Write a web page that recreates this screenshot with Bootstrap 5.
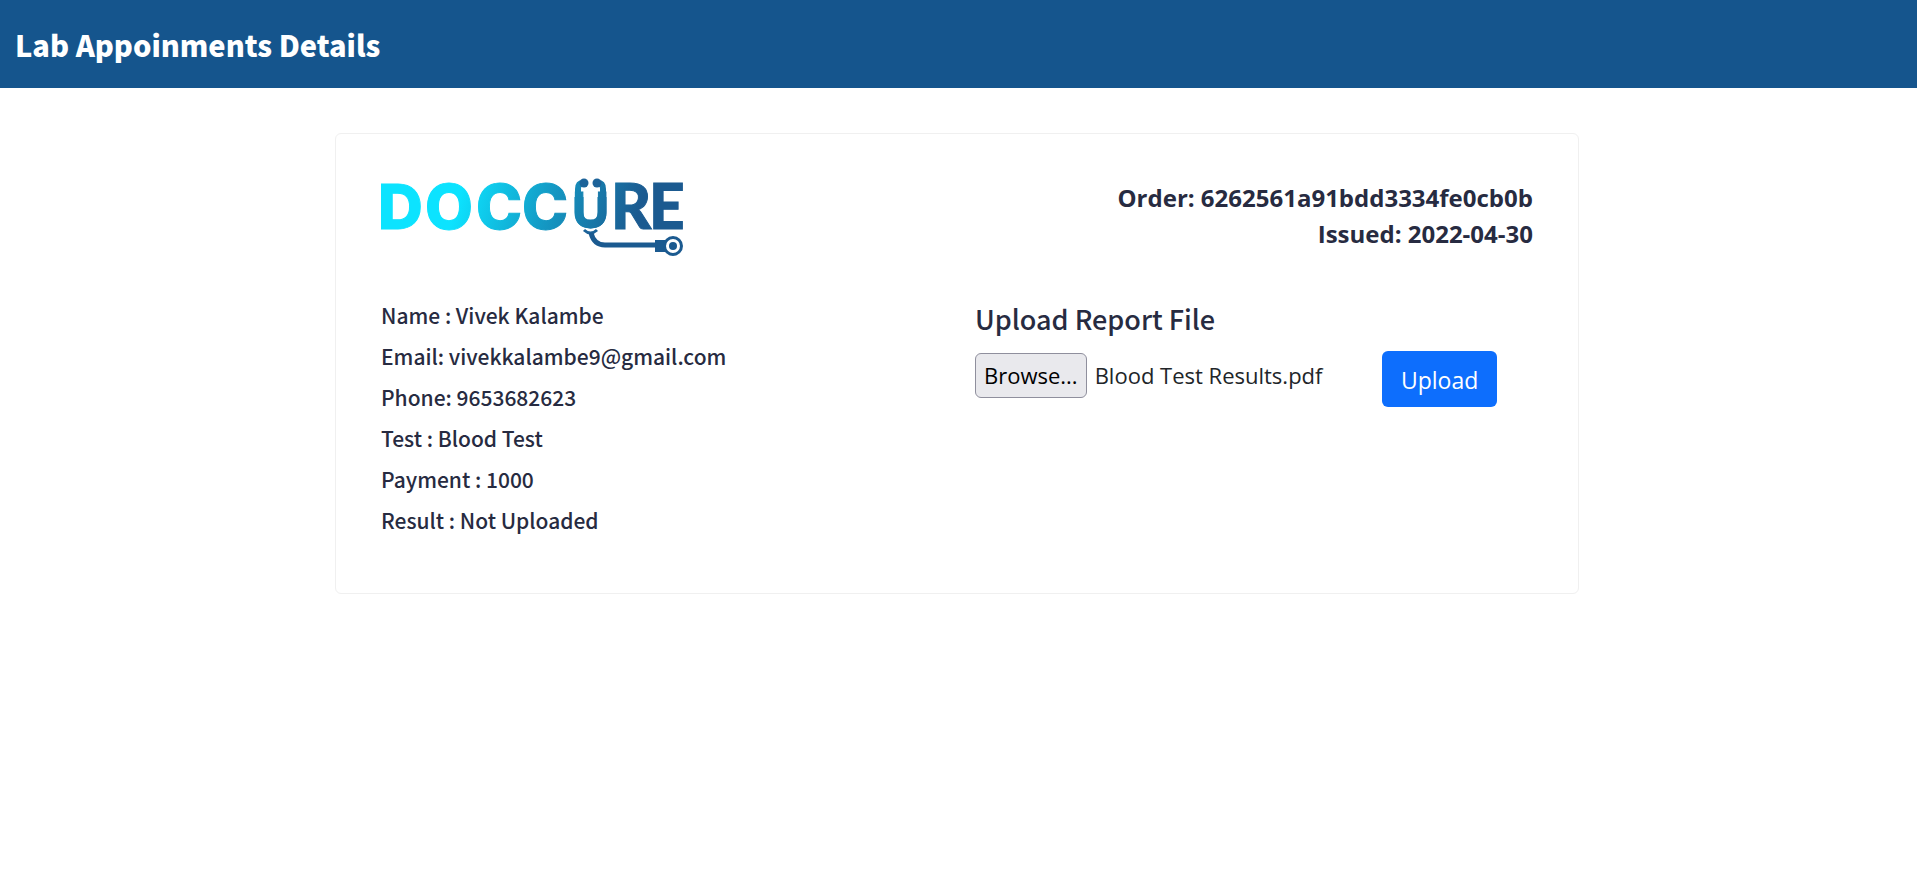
<!DOCTYPE html>
<html lang="en">
<head>
<meta charset="utf-8">
<meta name="viewport" content="width=device-width, initial-scale=1">
<title>Lab Appoinments Details</title>
<link href="https://cdn.jsdelivr.net/npm/bootstrap@5.3.0/dist/css/bootstrap.min.css" rel="stylesheet">
<style>
  :root { --ink: #272b41; --brand: #15558d; }
  body { font-family: "Open Sans", "Noto Sans", sans-serif; font-size: 22px; color: #212529; background: #fff; }
  .page-bar { background: var(--brand); color: #fff; padding: 20px 15px; }
  .page-bar h1 { font: 900 29px/48px "Noto Sans CJK JP", sans-serif; margin: 0; }
  .page-body { padding: 45px 19px 45px 16px; }
  .page-body > .row { --bs-gutter-x: 32px; }
  .invoice { border: 1px solid #f0f0f0; border-radius: 6px; padding: 44px 45px 46px; }
  .invoice-row { --bs-gutter-x: 36px; }
  .invoice-head { margin-bottom: 45px; }
  .order-info { font-size: 24px; font-weight: 700; line-height: 36px; color: var(--ink); padding-top: 2px; }
  .details li, .upload-title { font-family: "Noto Sans CJK JP", sans-serif; font-weight: 500; color: var(--ink); }
  .details li { font-size: 21px; line-height: 29px; margin-bottom: 12px; }
  .upload-title { font-size: 27px; line-height: 36px; margin-bottom: 14px; }
  .browse { background: #e9e9ed; border: 1px solid #8f8f9d; border-radius: 6px; padding: 4px 8px; line-height: 35px; color: #000; cursor: pointer; }
  .file-name { line-height: 35px; padding: 5px 0; margin-left: 8px; }
  .file-field { width: 407px; padding-top: 2px; }
  .btn-upload { font-size: 23px; line-height: 34px; padding: 12px 19px 10px; border-radius: 6px; border: 0; }
</style>
</head>
<body>
<header class="page-bar"><h1>Lab Appoinments Details</h1></header>
<main class="container-fluid page-body">
  <div class="row">
    <div class="col-lg-8 offset-lg-2">
      <section class="invoice bg-white">
        <div class="row invoice-row invoice-head">
          <div class="col-md-6">
            <svg class="d-block overflow-visible" width="302" height="78" viewBox="0 0 302 78" role="img" aria-label="Doccure">
              <defs>
                <linearGradient id="brandFade" gradientUnits="userSpaceOnUse" x1="80" y1="10" x2="250" y2="60">
                  <stop offset="0" stop-color="#0ce3ff"/>
                  <stop offset=".5" stop-color="#1499c4"/>
                  <stop offset="1" stop-color="#1b5a90"/>
                </linearGradient>
              </defs>
              <g fill="url(#brandFade)" stroke="url(#brandFade)" stroke-width="1" font-family="Inter, sans-serif" font-weight="800" font-size="62">
                <text y="51" x="-3 44 95 141">DOCC</text>
                <text y="50" x="191" font-family="Lato, sans-serif" font-weight="900" font-size="50">U</text>
                <text y="51" x="230 268" font-family="Lato, sans-serif" font-weight="900">RE</text>
              </g>
              <g fill="none" stroke="url(#brandFade)">
                <path stroke-width="9" d="M198 19V34Q198 46 209.500 46Q221 46 221 34V19"/>
                <path stroke-width="6" d="M197 20V11Q197 5 202 5M222 20V11Q222 5 217 5"/>
              </g>
              <g fill="#1d6399">
                <circle cx="203" cy="5" r="4.500"/><circle cx="216" cy="5" r="4.500"/>
              </g>
              <path d="M203 52Q209.500 58 216 52" fill="none" stroke="#1d6399" stroke-width="3"/>
              <path d="M210 55Q213 67 224 67H277" fill="none" stroke="#1b5a90" stroke-width="5"/>
              <path d="M274 62H287V74H274Z" fill="#1b5a90"/>
              <circle cx="292" cy="68" r="8.500" fill="#fff" stroke="#1b5a90" stroke-width="3"/>
              <circle cx="292" cy="68" r="4" fill="#1b5a90"/>
            </svg>
          </div>
          <div class="col-md-6">
            <p class="order-info text-end mb-0">Order: 6262561a91bdd3334fe0cb0b<br>Issued: 2022-04-30</p>
          </div>
        </div>
        <div class="row invoice-row">
          <div class="col-md-6">
            <ul class="details list-unstyled mb-0">
              <li>Name : Vivek Kalambe</li>
              <li>Email: vivekkalambe9@gmail.com</li>
              <li>Phone: 9653682623</li>
              <li>Test : Blood Test</li>
              <li>Payment : 1000</li>
              <li>Result : Not Uploaded</li>
            </ul>
          </div>
          <div class="col-md-6">
            <h2 class="upload-title">Upload Report File</h2>
            <form class="d-flex align-items-start">
              <div class="file-field d-flex">
                <input type="file" id="report" class="visually-hidden">
                <label for="report" class="browse">Browse...</label>
                <span class="file-name">Blood Test Results.pdf</span>
              </div>
              <button type="button" class="btn btn-primary btn-upload">Upload</button>
            </form>
          </div>
        </div>
      </section>
    </div>
  </div>
</main>
<script src="https://cdn.jsdelivr.net/npm/bootstrap@5.3.0/dist/js/bootstrap.bundle.min.js"></script>
</body>
</html>
